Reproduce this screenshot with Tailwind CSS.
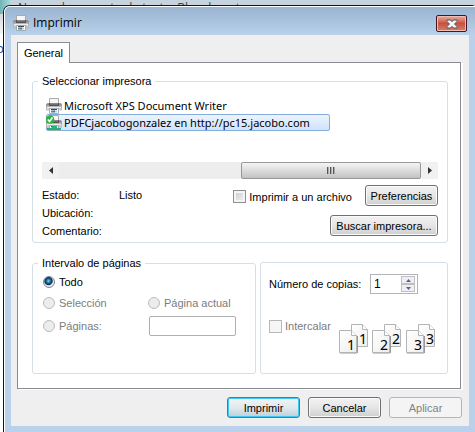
<!DOCTYPE html>
<html lang="es">
<head>
<meta charset="utf-8">
<meta name="viewport" content="width=device-width, initial-scale=1">
<title>Imprimir</title>
<script src="https://cdn.jsdelivr.net/npm/@tailwindcss/browser@4"></script>
</head>
<body class="relative min-h-screen overflow-hidden bg-white font-['Liberation_Sans',Arial,sans-serif] text-[11px] leading-4 text-black">

<svg width="0" height="0" class="absolute" aria-hidden="true">
  <defs>
    <linearGradient id="pg" x1="0" y1="0" x2="0" y2="1"><stop offset="0" stop-color="#777"/><stop offset=".45" stop-color="#b5b5b5"/><stop offset="1" stop-color="#e6e6e6"/></linearGradient>
    <linearGradient id="sheet" x1="0" y1="0" x2="1" y2="1"><stop offset="0" stop-color="#fff"/><stop offset="1" stop-color="#eee"/></linearGradient>
    <symbol id="printer" viewBox="0 0 16 16">
      <path d="M3.500 .5h9v6h-9z" fill="#f6f6f6" stroke="#aaa"/>
      <path d="M1 5.500h2v1h10v-1h2l1 1.500v5H0V7z" fill="url(#pg)" stroke="#888" stroke-width=".5"/>
      <path d="M3 5h10v3H3z" fill="#555"/><path d="M4 5h8v1.500H4z" fill="#888"/>
      <path d="M1 9h14v1H1z" fill="#eee"/>
      <path d="M3.500 10.500h9v5h-9z" fill="#fff" stroke="#999" stroke-width=".8"/>
      <path d="M5 11h6v1H5z" fill="#444"/><path d="M5 12.500h2v2H5z" fill="#3a9b9b"/><path d="M7 12.500h2v2H7z" fill="#3b6fb5"/><path d="M9 12.500h2v2H9z" fill="#bcd"/>
    </symbol>
    <symbol id="pages" viewBox="0 0 31 30">
      <path d="M12.500 .5h11l5 5v17h-16z" fill="url(#sheet)" stroke="#b4b4b4"/><path d="M23.500 .5v5h5" fill="#fff" stroke="#b4b4b4"/>
      <path d="M1 29h17M18.500 12v17" stroke="#999" stroke-width="1"/>
      <path d="M.5 6.500h12l5 5v17h-17z" fill="url(#sheet)" stroke="#b4b4b4"/><path d="M12.500 6.500v5h5" fill="#fff" stroke="#b4b4b4"/>
    </symbol>
  </defs>
</svg>

<div class="absolute inset-x-0 top-0 h-[14px] overflow-hidden bg-[#c6d3df] pl-[18px] font-['Open_Sans','Noto_Sans',sans-serif] text-[12px] text-[#444]" aria-hidden="true">
  <div class="absolute left-0 top-0 h-[14px] w-3 bg-linear-to-r from-[#6fb4b8] to-[#b5dfe3]"></div>
  <div class="whitespace-nowrap">Nuevo documento de texto: Bloc de notas</div>
</div>
<div class="absolute left-0 top-[14px] h-5 w-3 bg-linear-to-b from-[#d5dae0] to-[#f4f4f4]" aria-hidden="true"></div>
<div class="absolute -left-1 top-[40px] font-['Open_Sans',sans-serif] text-[13px] text-[#1d4f9c]" aria-hidden="true">p</div>

<main class="relative mt-[5px] ml-[3px] rounded-tl-[7px] rounded-tr-[3px] border-t border-l border-[#141418] bg-[#b9d1ea]">
 <div class="rounded-tl-[6px] border-t border-l border-white bg-[#b9d1ea] pr-[6px] pb-[6px] pl-[6px]">
  <header class="-mr-[6px] -ml-[6px] flex h-7 items-center rounded-tl-[5px] bg-linear-to-b from-[#99b4d1] to-[#b9d1ea] pr-2 pl-2">
    <svg class="mt-1 size-4" aria-hidden="true"><use href="#printer"/></svg>
    <h1 class="mt-1 ml-1 flex-1 font-['Open_Sans','Noto_Sans',sans-serif] text-[12px]">Imprimir</h1>
    <button type="button" aria-label="Cerrar" class="mt-[5px] flex h-[17px] w-[31px] items-center justify-center rounded-[2px] border border-[#431424] bg-linear-to-b from-[#e9aca2] from-0% via-[#c9503c] via-50% to-[#d1806c] shadow-[inset_0_0_0_1px_#f0bcb4]">
      <svg class="h-[10px] w-3" viewBox="0 0 12 10" aria-hidden="true"><path d="M1 1h3.500L6 2.700 7.500 1H11v1.500L8.500 5 11 7.500V9H7.500L6 7.300 4.500 9H1V7.500L3.500 5 1 2.500z" fill="#f5f5f5" stroke="#535666" stroke-width="1"/></svg>
    </button>
  </header>

  <form class="bg-[#efefef] px-[6px] pt-[7px] pb-2" onsubmit="return false">
    <div role="tablist" class="relative z-10 -mb-px flex">
      <button type="button" role="tab" aria-selected="true" class="h-[21px] w-[53px] border border-b-0 border-[#8b8b93] bg-white text-center">General</button>
    </div>

    <div role="tabpanel" aria-label="General" class="mr-[2px] flex flex-col border border-[#8b8b93] bg-white px-[14px] pt-[10px] pb-[14px] pr-3 shadow-[2px_1px_0_white]">
      <fieldset class="rounded-[3px] border border-[#d5dfe8] px-[9px] pb-[3px]">
        <legend class="-ml-1 px-1">Seleccionar impresora</legend>
        <ul id="printers" class="mt-2 pl-1 font-['Noto_Sans','Open_Sans',sans-serif]" role="listbox" aria-label="Impresoras">
          <li role="option" class="flex h-[17px] items-center"><svg class="size-4" aria-hidden="true"><use href="#printer"/></svg><span class="ml-[2px]">Microsoft XPS Document Writer</span></li>
          <li role="option" aria-selected="true" class="flex h-[17px] w-[284px] items-center rounded-[2px] border border-[#84acdd] bg-linear-to-b from-[#ecf4fe] to-[#cfe3fd]">
            <svg class="-ml-px size-4 shrink-0" viewBox="0 0 16 16" aria-hidden="true"><use href="#printer"/><path d="M6 11h5v2h4v2H1v-2h5z" fill="#20b47c"/><circle cx="4" cy="4.500" r="4.300" fill="#2fb43c"/><path d="M1.800 4.500l1.700 2L6.500 2.500" fill="none" stroke="#fff" stroke-width="1.500"/></svg>
            <span class="ml-[2px] whitespace-nowrap">PDFCjacobogonzalez en http://pc15.jacobo.com</span>
          </li>
        </ul>
        <div role="scrollbar" aria-label="Desplazamiento" aria-orientation="horizontal" aria-controls="printers" aria-valuenow="100" class="mt-[31px] flex h-[17px] items-stretch bg-[#ededed]">
          <button type="button" aria-label="Izquierda" class="flex w-[17px] items-center justify-center bg-[#f1f1f1]"><svg class="h-[7px] w-1" viewBox="0 0 4 7" aria-hidden="true"><path d="M4 0v7L0 3.500z" fill="#333"/></svg></button>
          <div class="flex-1"></div>
          <div class="flex w-[180px] items-center justify-center gap-px rounded-[2px] border border-[#979797] bg-linear-to-b from-[#f4f4f4] from-0% via-[#dcdcdc] via-50% to-[#c2c2c4]">
            <i class="h-[7px] w-[2px] border-l border-[#555] bg-[#aaa]"></i><i class="h-[7px] w-[2px] border-l border-[#555] bg-[#aaa]"></i><i class="h-[7px] w-[2px] border-l border-[#555] bg-[#aaa]"></i>
          </div>
          <button type="button" aria-label="Derecha" class="flex w-[17px] items-center justify-center bg-[#f1f1f1]"><svg class="h-[7px] w-1" viewBox="0 0 4 7" aria-hidden="true"><path d="M0 0v7L4 3.500z" fill="#333"/></svg></button>
        </div>
        <div class="mt-[6px] flex items-start justify-between">
          <dl class="mt-[2px] grid grid-cols-[77px_auto] gap-y-[2px]">
            <dt>Estado:</dt><dd>Listo</dd>
            <dt>Ubicación:</dt><dd></dd>
            <dt>Comentario:</dt><dd></dd>
          </dl>
          <div class="flex flex-col items-end gap-[9px]">
            <div class="flex items-center">
              <label class="mr-[13px] flex items-center gap-[3px] pt-[2px]"><input type="checkbox" class="size-[13px] appearance-none border border-[#8e8f8f] bg-linear-to-br from-[#c4c8d0] to-[#f6f6f6] shadow-[inset_0_0_0_2px_#f4f4f4]">Imprimir a un archivo</label>
              <button type="button" class="h-[21px] w-[73px] rounded-[3px] border border-[#707070] bg-linear-to-b from-[#f2f2f2] from-0% via-[#e6e6e6] via-50% to-[#cfcfcf] shadow-[inset_0_0_0_1px_#fbfbfb]">Preferencias</button>
            </div>
            <button type="button" class="h-[21px] w-[108px] rounded-[3px] border border-[#707070] bg-linear-to-b from-[#f2f2f2] from-0% via-[#e6e6e6] via-50% to-[#cfcfcf] shadow-[inset_0_0_0_1px_#fbfbfb]">Buscar impresora...</button>
          </div>
        </div>
      </fieldset>

      <div class="mt-3 flex items-stretch gap-1">
        <fieldset class="w-[224px] rounded-[3px] border border-[#d5dfe8] px-[10px]">
          <legend class="-ml-[5px] px-1">Intervalo de páginas</legend>
          <div class="grid grid-cols-[105px_auto] items-center gap-y-[5px] pt-[3px] text-[#7c7c7c]">
            <label class="col-span-2 flex items-center gap-1 text-black"><input type="radio" name="rango" checked class="size-3 appearance-none rounded-full border border-[#7f8790] bg-[radial-gradient(circle_at_45%_40%,#8fd4f5_0,#1b6fa5_25%,#0c2c49_45%,#e8edf0_58%)]">Todo</label>
            <label class="flex items-center gap-1"><input type="radio" name="rango" disabled class="size-3 appearance-none rounded-full border border-[#bcbcbc] bg-[#ececec]">Selección</label>
            <label class="flex items-center gap-1 whitespace-nowrap"><input type="radio" name="rango" disabled class="size-3 appearance-none rounded-full border border-[#bcbcbc] bg-[#ececec]">Página actual</label>
            <label class="flex items-center gap-1"><input type="radio" name="rango" disabled class="size-3 appearance-none rounded-full border border-[#bcbcbc] bg-[#ececec]">Páginas:</label>
            <input type="text" disabled aria-label="Páginas" class="ml-px h-5 w-[87px] rounded-[2px] border border-[#afafaf] bg-white">
          </div>
        </fieldset>
        <fieldset class="mt-[7px] h-[112px] flex-1 rounded-[3px] border border-[#d5dfe8] pt-[11px] pl-2" aria-label="Copias">
          <div class="flex items-center">
            <label for="copias" class="w-[101px] whitespace-nowrap">Número de copias:</label>
            <div class="flex h-5 w-12 border border-[#b4b4b8] p-px pr-[2px]">
              <input id="copias" type="text" value="1" class="w-0 flex-1 pl-[2px] text-[12px] outline-none">
              <div class="flex w-[14px] flex-col">
                <button type="button" aria-label="Más" class="flex flex-1 items-center justify-center border border-[#c0c0c4] bg-[#efefef]"><svg class="h-[3px] w-[5px]" viewBox="0 0 5 3" aria-hidden="true"><path d="M0 3h5L2.500 0z" fill="#4a62ad"/></svg></button>
                <button type="button" aria-label="Menos" class="flex flex-1 items-center justify-center border border-[#c0c0c4] bg-[#efefef]"><svg class="h-[3px] w-[5px]" viewBox="0 0 5 3" aria-hidden="true"><path d="M0 0h5L2.500 3z" fill="#4a62ad"/></svg></button>
              </div>
            </div>
          </div>
          <div class="mt-6 flex items-start">
            <label class="flex w-[70px] items-center gap-[3px] text-[#7c7c7c]"><input type="checkbox" disabled class="size-[13px] appearance-none border border-[#b8b8b8] bg-[#f6f6f6]">Intercalar</label>
            <svg class="mt-[6px] h-[30px] w-[99px] font-['Noto_Sans',sans-serif] text-[14px]" viewBox="0 0 99 30" role="img" aria-label="Orden de copias">
              <use href="#pages" width="31" height="30"/><text x="8" y="26">1</text><text x="20" y="20">1</text>
              <use href="#pages" x="33" width="31" height="30"/><text x="41" y="26">2</text><text x="53" y="20">2</text>
              <use href="#pages" x="67" width="31" height="30"/><text x="75" y="26">3</text><text x="87" y="20">3</text>
            </svg>
          </div>
        </fieldset>
      </div>
    </div>

    <div class="mt-2 mr-px flex justify-end gap-2">
      <button type="submit" class="h-[21px] w-[73px] rounded-[3px] border border-[#3c7fb1] bg-linear-to-b from-[#f0f5f7] from-0% via-[#e0e9ee] via-50% to-[#bfd0d9] shadow-[inset_0_0_0_1px_#3fc8f2]">Imprimir</button>
      <button type="button" class="h-[21px] w-[73px] rounded-[3px] border border-[#707070] bg-linear-to-b from-[#f2f2f2] from-0% via-[#e6e6e6] via-50% to-[#cfcfcf] shadow-[inset_0_0_0_1px_#fbfbfb]">Cancelar</button>
      <button type="button" disabled class="h-[21px] w-[73px] rounded-[3px] border border-[#b4b6b8] bg-[#f4f4f4] text-[#838383]">Aplicar</button>
    </div>
  </form>
 </div>
</main>
</body>
</html>
